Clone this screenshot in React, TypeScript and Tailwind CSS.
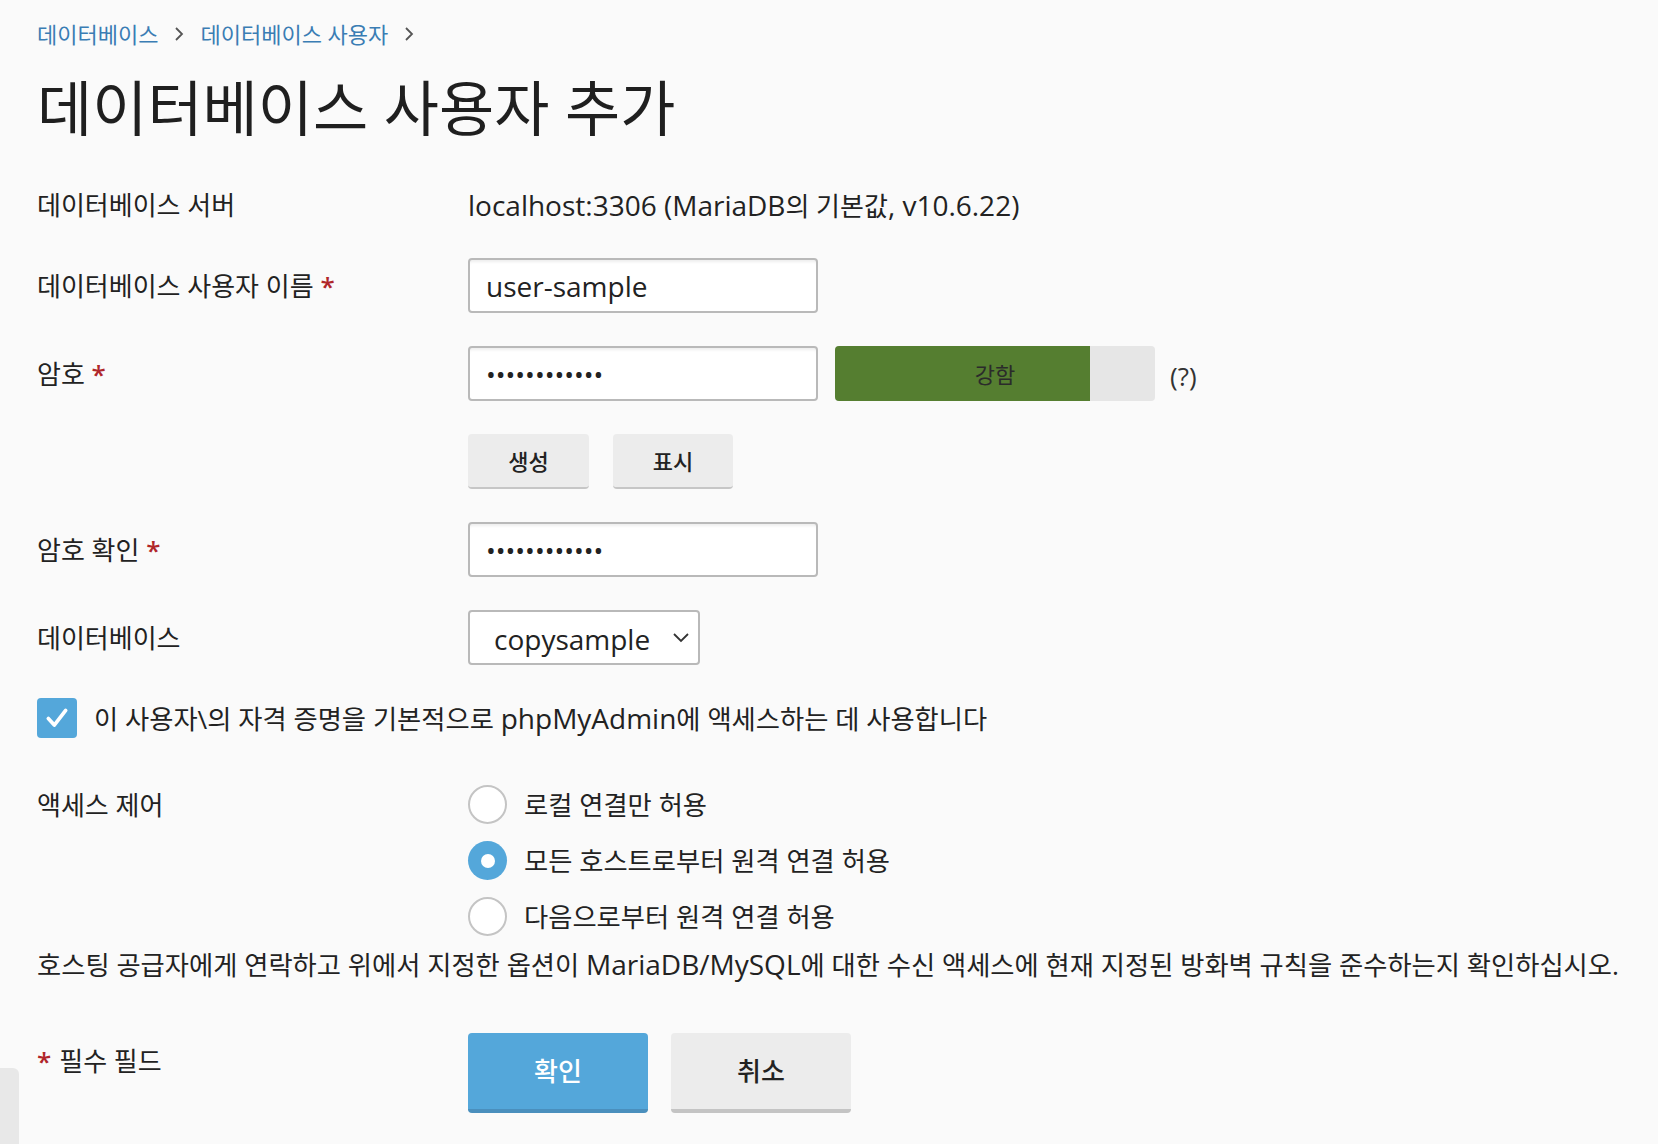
import React, { useState } from "react";

const Latin = ({ children }: { children: React.ReactNode }) => (
  <span className="text-[28px]">{children}</span>
);

const Req = () => <span className="text-[#b0262a] font-semibold"> *</span>;

const Label = ({ children }: { children: React.ReactNode }) => (
  <div className="flex items-center h-full">
    <span>{children}</span>
  </div>
);

const TextBox = ({ value, type = "text" }: { value: string; type?: string }) => (
  <input
    type={type}
    value={value}
    readOnly
    className={`w-[350px] h-[55px] border-2 border-[#b9b9b9] rounded-[4px] bg-white shadow-[inset_0_4px_3px_-2px_rgba(0,0,0,0.07)] px-[16px] text-[#222] outline-none ${
      type === "password" ? "text-[26px]" : "text-[28px]"
    }`}
  />
);

const Radio = ({ checked, label }: { checked?: boolean; label: string }) => (
  <div className="flex items-center gap-[17px] h-[39px]">
    {checked ? (
      <div className="w-[39px] h-[39px] rounded-full bg-[#54a7da] flex items-center justify-center">
        <div className="w-[14px] h-[14px] rounded-full bg-white" />
      </div>
    ) : (
      <div className="w-[39px] h-[39px] rounded-full border-2 border-[#c4c4c4] bg-white" />
    )}
    <span className="text-[26.3px]">{label}</span>
  </div>
);

export default function App() {
  const [access, setAccess] = useState("any");

  return (
    <div className="min-h-screen bg-[#fafafa] text-[#222] text-[26px] leading-[34px] font-['Open_Sans','Noto_Sans_CJK_KR',sans-serif]">
      {/* header */}
      <div className="h-[185px] px-[37px] pt-[20px]">
        <div className="flex items-center h-[28px] text-[22px] leading-[28px] text-[#3a7db4]">
          <span>데이터베이스</span>
          <svg className="mx-[16px] w-[10px] h-[16px]" viewBox="0 0 10 16" fill="none">
            <path d="M2 2l6 6-6 6" stroke="#555" strokeWidth="1.8" />
          </svg>
          <span>데이터베이스 사용자</span>
          <svg className="mx-[16px] w-[10px] h-[16px]" viewBox="0 0 10 16" fill="none">
            <path d="M2 2l6 6-6 6" stroke="#555" strokeWidth="1.8" />
          </svg>
        </div>
        <h1 className="mt-[20px] h-[80px] flex items-center text-[60px] leading-none text-[#1f1f1f]">
          데이터베이스 사용자 추가
        </h1>
      </div>

      {/* form */}
      <div className="px-[37px] flex flex-col">
        <div className="grid grid-cols-[431px_1fr] h-[40px]">
          <Label>데이터베이스 서버</Label>
          <div className="flex items-center">
            <span>
              <Latin>localhost:3306 (MariaDB</Latin>의 기본값<Latin>, v10.6.22)</Latin>
            </span>
          </div>
        </div>

        <div className="grid grid-cols-[431px_1fr] h-[55px] mt-[33px]">
          <Label>
            데이터베이스 사용자 이름<Req />
          </Label>
          <TextBox value="user-sample" />
        </div>

        <div className="grid grid-cols-[431px_1fr] h-[55px] mt-[33px]">
          <Label>
            암호<Req />
          </Label>
          <div className="flex items-center">
            <TextBox value="abcdefghijkl" type="password" />
            <div className="ml-[17px] w-[320px] h-[55px] grid rounded-[4px] overflow-hidden bg-[#e6e6e6]">
              <div className="col-start-1 row-start-1 w-[255px] h-full bg-[#557e30]" />
              <div className="col-start-1 row-start-1 flex items-center justify-center text-[22px] text-[#2b2b2b]">
                강함
              </div>
            </div>
            <span className="ml-[15px] mt-[4px] text-[#333]">(?)</span>
          </div>
        </div>

        <div className="grid grid-cols-[431px_1fr] h-[55px] mt-[33px]">
          <div />
          <div className="flex gap-[24px]">
            <button className="w-[121px] h-[55px] bg-[#ececec] rounded-[4px] border-b-2 border-[#c6c6c6] text-[22px] font-medium text-[#222]">
              생성
            </button>
            <button className="w-[120px] h-[55px] bg-[#ececec] rounded-[4px] border-b-2 border-[#c6c6c6] text-[22px] font-medium text-[#222]">
              표시
            </button>
          </div>
        </div>

        <div className="grid grid-cols-[431px_1fr] h-[55px] mt-[33px]">
          <Label>
            암호 확인<Req />
          </Label>
          <TextBox value="abcdefghijkl" type="password" />
        </div>

        <div className="grid grid-cols-[431px_1fr] h-[55px] mt-[33px]">
          <Label>데이터베이스</Label>
          <div className="w-[232px] h-[55px] border-2 border-[#b9b9b9] rounded-[4px] bg-white flex items-center justify-between pl-[24px] pr-[8px]">
            <span className="text-[28px] mt-[3px]">copysample</span>
            <svg className="w-[18px] h-[11px]" viewBox="0 0 18 11" fill="none">
              <path d="M2 2l7 7 7-7" stroke="#333" strokeWidth="1.8" />
            </svg>
          </div>
        </div>

        <div className="flex items-center h-[40px] mt-[33px]">
          <div className="w-[40px] h-[40px] rounded-[4px] bg-[#54a7da] flex items-center justify-center">
            <svg className="w-[26px] h-[26px]" viewBox="0 0 24 24" fill="none">
              <path d="M4 12.5l5.5 6L20 5" stroke="white" strokeWidth="3.4" strokeLinecap="round" strokeLinejoin="round" />
            </svg>
          </div>
          <span className="ml-[17px] text-[26.3px]">
            {"이 사용자\\의 자격 증명을 기본적으로 "}
            <Latin>phpMyAdmin</Latin>에 액세스하는 데 사용합니다
          </span>
        </div>

        <div className="grid grid-cols-[431px_1fr] mt-[47px]">
          <div className="h-[39px] flex items-center">액세스 제어</div>
          <div className="flex flex-col gap-[17px]">
            <div onClick={() => setAccess("local")}>
              <Radio checked={access === "local"} label="로컬 연결만 허용" />
            </div>
            <div onClick={() => setAccess("any")}>
              <Radio checked={access === "any"} label="모든 호스트로부터 원격 연결 허용" />
            </div>
            <div onClick={() => setAccess("from")}>
              <Radio checked={access === "from"} label="다음으로부터 원격 연결 허용" />
            </div>
          </div>
        </div>

        <p className="mt-[11px] text-[26.3px] whitespace-nowrap">
          호스팅 공급자에게 연락하고 위에서 지정한 옵션이 <Latin>MariaDB/MySQL</Latin>에 대한 수신 액세스에 현재 지정된
          방화벽 규칙을 준수하는지 확인하십시오.
        </p>

        <div className="grid grid-cols-[431px_1fr] mt-[51px]">
          <div className="h-[56px] flex items-center">
            <span className="text-[#b0262a] font-semibold mr-[8px]">*</span>필수 필드
          </div>
          <div className="flex gap-[23px]">
            <button className="w-[180px] h-[80px] bg-[#54a7da] rounded-[4px] border-b-4 border-[#4a8fbd] text-white text-[26px] font-medium">
              확인
            </button>
            <button className="w-[180px] h-[80px] bg-[#ececec] rounded-[4px] border-b-4 border-[#c4c4c4] text-[#222] text-[26px] font-medium">
              취소
            </button>
          </div>
        </div>
      </div>

      <div className="fixed left-0 bottom-0 w-[19px] h-[76px] bg-[#e8e8e8] rounded-tr-[6px]" />
    </div>
  );
}
